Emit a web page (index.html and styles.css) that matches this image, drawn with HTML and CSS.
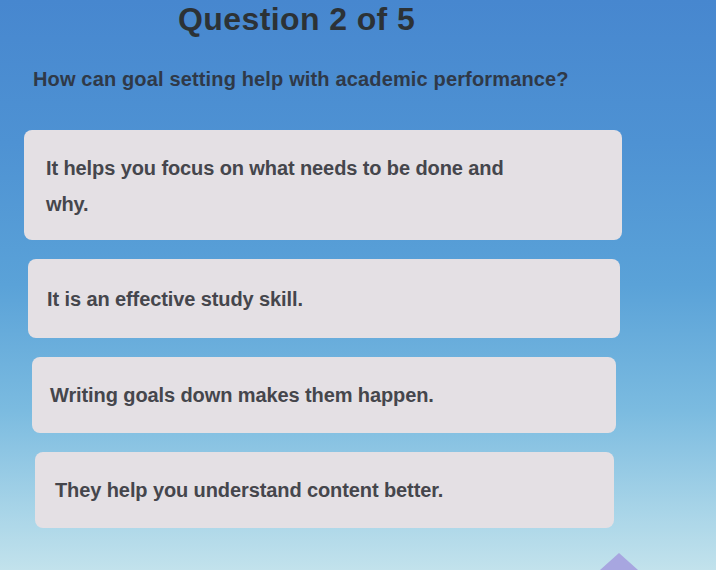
FILE: index.html
```html
<!DOCTYPE html>
<html lang="en">
<head>
<meta charset="utf-8">
<title>Question 2 of 5</title>
<link rel="stylesheet" href="styles.css">
</head>
<body>
<main class="quiz">
  <h1 class="quiz-title">Question 2 of 5</h1>
  <p class="quiz-question">How can goal setting help with academic performance?</p>
  <ul class="options">
    <li class="option option-1">It helps you focus on what needs to be done and<br>why.</li>
    <li class="option option-2">It is an effective study skill.</li>
    <li class="option option-3">Writing goals down makes them happen.</li>
    <li class="option option-4">They help you understand content better.</li>
  </ul>
  <div class="next-arrow"></div>
</main>
</body>
</html>
```

FILE: styles.css
```css
html, body {
  margin: 0;
  padding: 0;
  height: 100%;
}

body {
  background: linear-gradient(180deg, #4787cf 0%, #4e92d3 25%, #5aa2d8 50%, #7bbbe0 72%, #a9d5e8 90%, #c2e2ec 100%);
  font-family: "Liberation Sans", Arial, sans-serif;
  overflow: hidden;
}

.quiz {
  position: relative;
  height: 570px;
  padding-top: 2px;
  box-sizing: border-box;
  display: flex;
  flex-direction: column;
}

.quiz-title {
  margin: 0 0 0 178px;
  font-size: 32px;
  line-height: 34px;
  font-weight: 700;
  letter-spacing: 0.4px;
  color: #2c3236;
}

.quiz-question {
  margin: 31px 0 0 33px;
  font-size: 20px;
  line-height: 24px;
  font-weight: 700;
  letter-spacing: 0.15px;
  color: #2f3948;
}

.options {
  list-style: none;
  margin: 39px 0 0 0;
  padding: 0;
  display: flex;
  flex-direction: column;
  gap: 19px;
}

.option {
  background: #e4e0e4;
  border-radius: 8px;
  padding: 20px 20px 20px 22px;
  font-size: 20px;
  line-height: 36px;
  font-weight: 700;
  color: #45464c;
  letter-spacing: -0.1px;
}

.option-1 {
  margin: 0 94px 0 24px;
  padding-top: 20px;
  padding-bottom: 18px;
}

.option-2 {
  margin: 0 96px 0 28px;
  padding-top: 22px;
  padding-bottom: 21px;
  padding-left: 19px;
}

.option-3 {
  margin: 0 100px 0 32px;
  padding-left: 18px;
}

.option-4 {
  margin: 0 102px 0 35px;
  padding-left: 20px;
}

.next-arrow {
  position: absolute;
  left: 600px;
  top: 553px;
  width: 0;
  height: 0;
  border-left: 19px solid transparent;
  border-right: 19px solid transparent;
  border-bottom: 17px solid #a7a6e0;
}
```
